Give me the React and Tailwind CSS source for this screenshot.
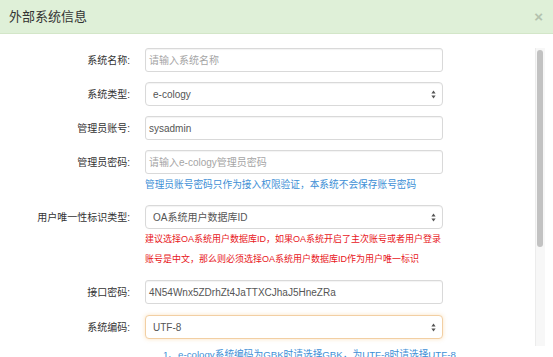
import React from "react";

const FONT = { fontFamily: '"Liberation Sans", "Noto Sans CJK SC", sans-serif' };

function Arrows() {
  return (
    <svg width="5" height="9" viewBox="0 0 5 9" className="shrink-0">
      <path d="M2.5 0.5 L4.6 3.4 L0.4 3.4 Z" fill="#555" />
      <path d="M2.5 8.5 L4.6 5.6 L0.4 5.6 Z" fill="#555" />
    </svg>
  );
}

function Field({ label, children, className = "" }) {
  return (
    <div className={"flex items-start " + className}>
      <div className="w-[130px] h-[24px] flex items-center justify-end text-[10px] text-[#333] shrink-0">
        {label}
      </div>
      <div className="ml-[15px] w-[298px]">{children}</div>
    </div>
  );
}

function Input({ value, placeholder }) {
  return (
    <div className="h-[24px] border border-[#d9d9d9] rounded-[3px] bg-white shadow-[inset_0_1px_1px_rgba(0,0,0,0.05)] flex items-center pl-[3px] text-[10px]">
      {value ? <span className="text-[#555]">{value}</span> : <span className="text-[#a5a5a5]">{placeholder}</span>}
    </div>
  );
}

function Select({ value, focus }) {
  return (
    <div
      className={
        "h-[24px] rounded-[4px] bg-white flex items-center justify-between pl-[7px] pr-[6px] text-[10px] text-[#555] border " +
        (focus
          ? "border-[#f2cfa3] shadow-[0_0_4px_rgba(240,173,78,0.35)]"
          : "border-[#d9d9d9] shadow-[inset_0_1px_1px_rgba(0,0,0,0.05)]")
      }
    >
      <span>{value}</span>
      <Arrows />
    </div>
  );
}

export default function App() {
  return (
    <div className="w-[553px] h-[357px] overflow-hidden bg-white flex flex-col" style={FONT}>
      <div className="h-[34px] shrink-0 bg-[#dff0d8] border-b border-[#d3e6c8] flex items-center justify-between pl-[9px] pr-[10px]">
        <span className="text-[13px] text-[#333]">外部系统信息</span>
        <span className="text-[15px] leading-none text-[#b3c2ae] font-bold">×</span>
      </div>
      <div className="flex flex-1 min-h-0">
        <div className="flex-1 pt-[14px]">
          <Field label="系统名称:" className="mb-[10px]">
            <Input placeholder="请输入系统名称" />
          </Field>
          <Field label="系统类型:" className="mb-[10px]">
            <Select value="e-cology" />
          </Field>
          <Field label="管理员账号:" className="mb-[10px]">
            <Input value="sysadmin" />
          </Field>
          <Field label="管理员密码:" className="mb-[13px]">
            <Input placeholder="请输入e-cology管理员密码" />
            <div className="mt-[4px] text-[9.7px] leading-[14px] text-[#3d8fd6] whitespace-nowrap">
              管理员账号密码只作为接入权限验证，本系统不会保存账号密码
            </div>
          </Field>
          <Field label="用户唯一性标识类型:" className="mb-[11px]">
            <Select value="OA系统用户数据库ID" />
            <div className="mt-[0px] text-[9px] leading-[20px] text-[#e8161b] whitespace-nowrap">
              建议选择OA系统用户数据库ID，如果OA系统开启了主次账号或者用户登录
              <br />
              账号是中文，那么则必须选择OA系统用户数据库ID作为用户唯一标识
            </div>
          </Field>
          <Field label="接口密码:" className="mb-[11px]">
            <Input value="4N54Wnx5ZDrhZt4JaTTXCJhaJ5HneZRa" />
          </Field>
          <Field label="系统编码:">
            <Select value="UTF-8" focus />
            <div className="mt-[9px] pl-[18px] text-[9.7px] leading-[14px] text-[#3d8fd6] whitespace-nowrap">
              1、e-cology系统编码为GBK时请选择GBK，为UTF-8时请选择UTF-8
            </div>
          </Field>
        </div>
        <div className="w-[18px] shrink-0 pt-[14px] pb-[11px]">
          <div className="w-[10px] h-full bg-[#f7f7f7] border-l border-[#ececec] px-[1px] pt-[2px]">
            <div className="w-[6px] h-[197px] rounded-[3px] bg-[#c2c2c2]" />
          </div>
        </div>
      </div>
    </div>
  );
}
